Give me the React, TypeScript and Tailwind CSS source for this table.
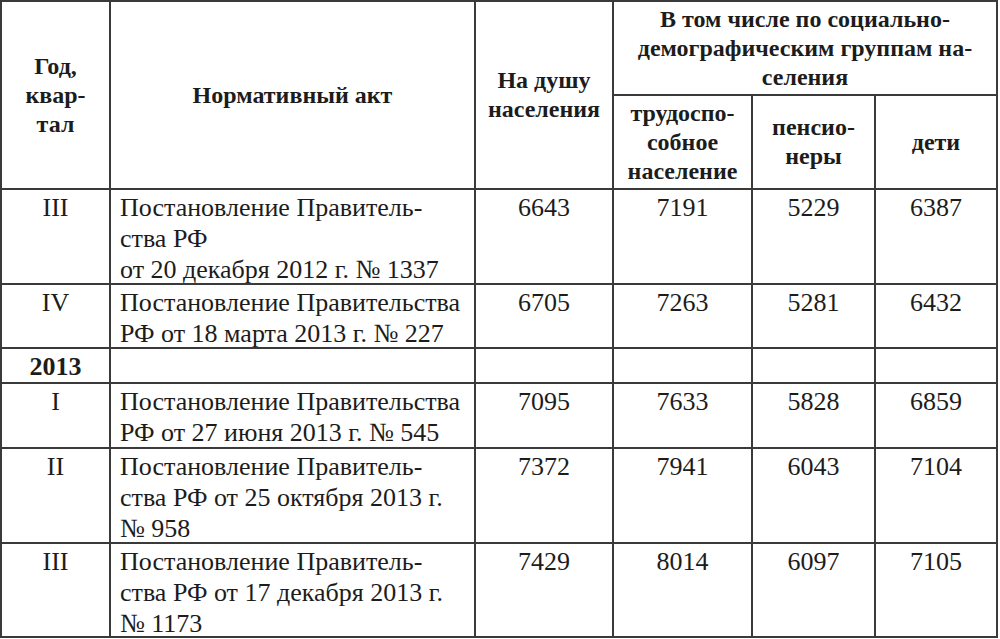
const rows = [
  {
    q: 'III',
    act: ['Постановление Правитель-', 'ства РФ', 'от 20 декабря 2012 г. № 1337'],
    v: ['6643', '7191', '5229', '6387'],
  },
  {
    q: 'IV',
    act: ['Постановление Правительства', 'РФ от 18 марта 2013 г. № 227'],
    v: ['6705', '7263', '5281', '6432'],
  },
  { q: '2013', year: true, act: [], v: ['', '', '', ''] },
  {
    q: 'I',
    act: ['Постановление Правительства', 'РФ от 27 июня 2013 г. № 545'],
    v: ['7095', '7633', '5828', '6859'],
  },
  {
    q: 'II',
    act: ['Постановление Правитель-', 'ства РФ от 25 октября 2013 г.', '№ 958'],
    v: ['7372', '7941', '6043', '7104'],
  },
  {
    q: 'III',
    act: ['Постановление Правитель-', 'ства РФ от 17 декабря 2013 г.', '№ 1173'],
    v: ['7429', '8014', '6097', '7105'],
  },
];

function Lines({ items }: { items: string[] }) {
  return (
    <>
      {items.map((t, i) => (
        <span key={i} className="block">
          {t}
        </span>
      ))}
    </>
  );
}

export default function App() {
  const head = 'flex items-center justify-center bg-white text-center font-bold text-[24px] leading-[29px]';
  const cell = 'bg-white pt-[2px] text-[26px] leading-[31px]';

  return (
    <div className="min-h-screen bg-white [font-family:'Liberation_Serif','Times_New_Roman',serif] text-[#1c1c1c]">
      <div className="grid w-[998px] grid-cols-[107px_363px_136px_137px_121px_120px] grid-rows-[92px_92px_93px_62px_33px_63px_93px_92px] gap-[2px] bg-[#3a3a3a] p-[2px]">
        <div className={`${head} row-span-2`}>
          <div>
            <Lines items={['Год,', 'квар-', 'тал']} />
          </div>
        </div>
        <div className={`${head} row-span-2`}>Нормативный акт</div>
        <div className={`${head} row-span-2`}>
          <div>
            <Lines items={['На душу', 'населения']} />
          </div>
        </div>
        <div className={`${head} col-span-3`}>
          <div>
            <Lines items={['В том числе по социально-', 'демографическим группам на-', 'селения']} />
          </div>
        </div>
        <div className={head}>
          <div>
            <Lines items={['трудоспо-', 'собное', 'население']} />
          </div>
        </div>
        <div className={head}>
          <div>
            <Lines items={['пенсио-', 'неры']} />
          </div>
        </div>
        <div className={head}>дети</div>

        {rows.map((r, i) => (
          <div key={i} className="contents">
            <div className={`${cell} text-center ${r.year ? 'font-bold' : ''}`}>{r.q}</div>
            <div className={`${cell} pl-[9px] whitespace-nowrap`}>
              <Lines items={r.act} />
            </div>
            {r.v.map((n, j) => (
              <div key={j} className={`${cell} text-center`}>
                {n}
              </div>
            ))}
          </div>
        ))}
      </div>
    </div>
  );
}
